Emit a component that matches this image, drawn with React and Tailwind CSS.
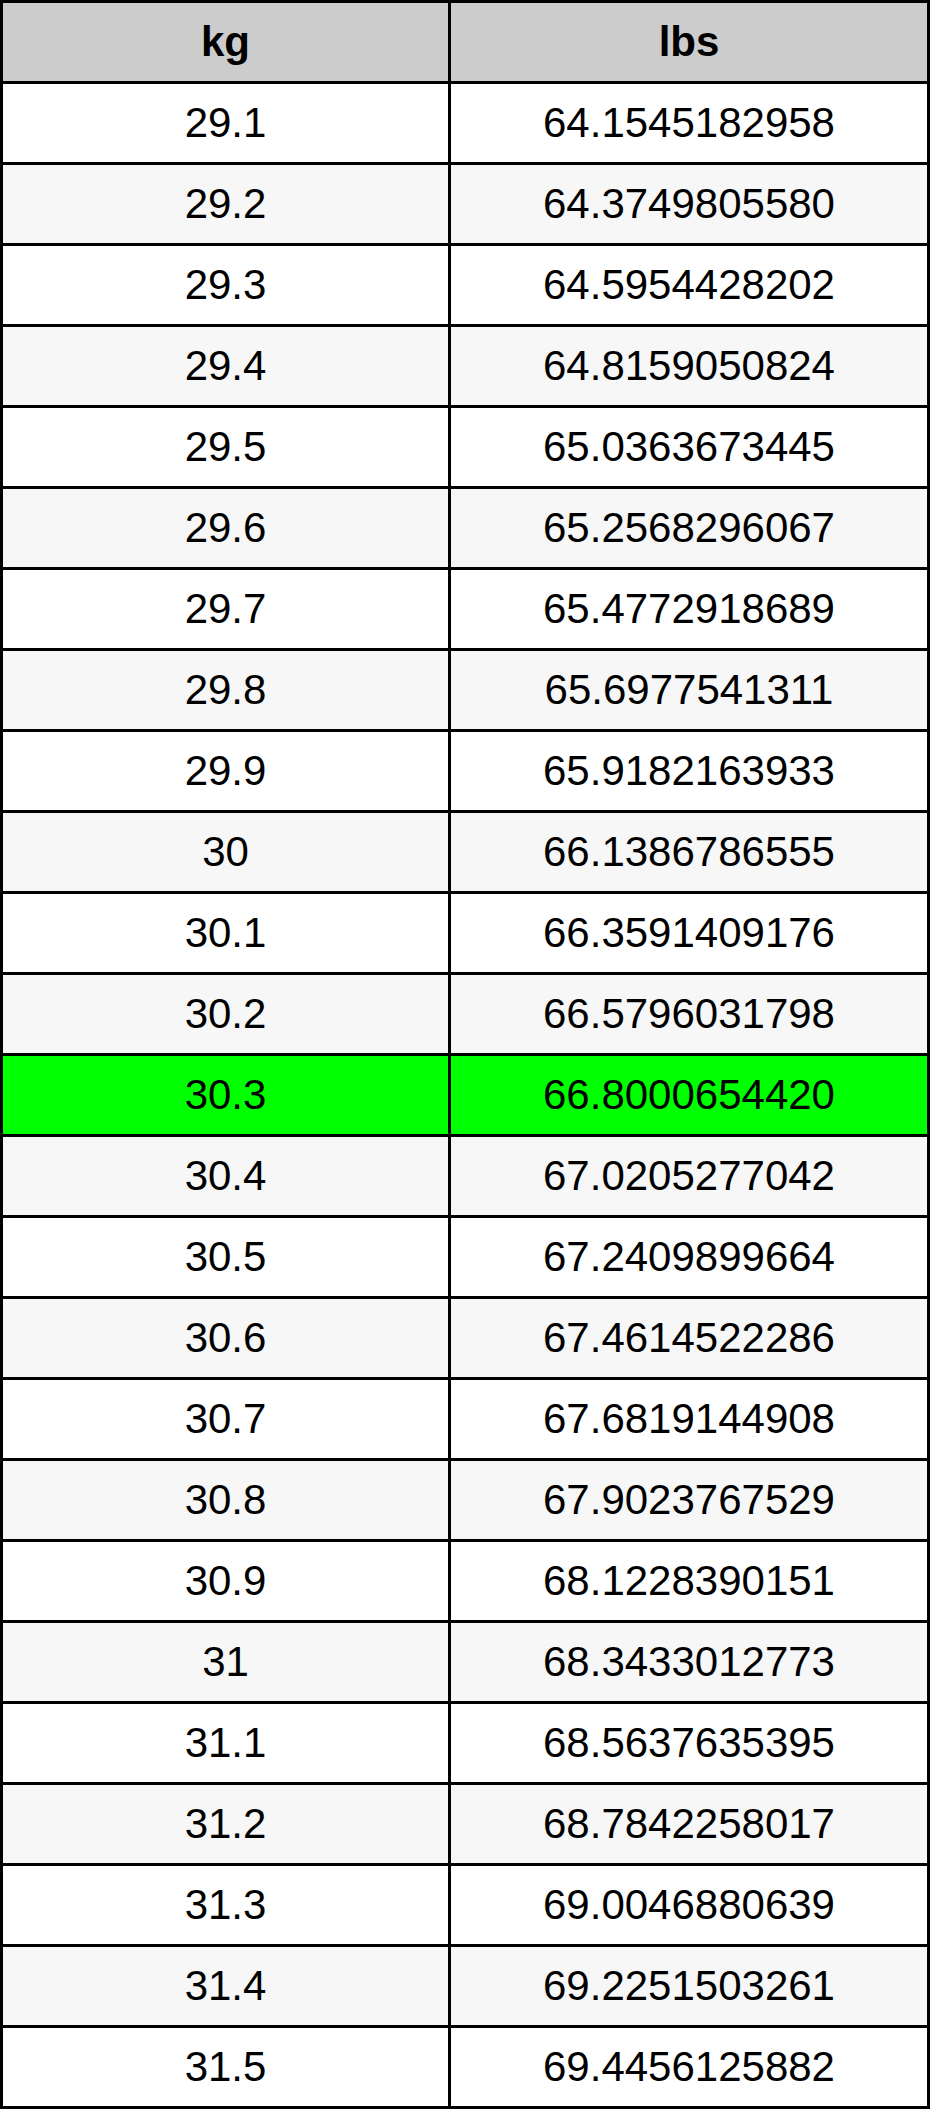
const rows = [
  ["29.1", "64.1545182958"],
  ["29.2", "64.3749805580"],
  ["29.3", "64.5954428202"],
  ["29.4", "64.8159050824"],
  ["29.5", "65.0363673445"],
  ["29.6", "65.2568296067"],
  ["29.7", "65.4772918689"],
  ["29.8", "65.6977541311"],
  ["29.9", "65.9182163933"],
  ["30", "66.1386786555"],
  ["30.1", "66.3591409176"],
  ["30.2", "66.5796031798"],
  ["30.3", "66.8000654420"],
  ["30.4", "67.0205277042"],
  ["30.5", "67.2409899664"],
  ["30.6", "67.4614522286"],
  ["30.7", "67.6819144908"],
  ["30.8", "67.9023767529"],
  ["30.9", "68.1228390151"],
  ["31", "68.3433012773"],
  ["31.1", "68.5637635395"],
  ["31.2", "68.7842258017"],
  ["31.3", "69.0046880639"],
  ["31.4", "69.2251503261"],
  ["31.5", "69.4456125882"],
];

function Row({ kg, lbs, bg, bold }) {
  return (
    <div className={`flex h-[81px] border-b-[3px] border-black ${bg}`}>
      <div
        className={`flex w-[448px] items-center justify-center border-r-[3px] border-black ${bold ? "font-bold" : ""}`}
      >
        {kg}
      </div>
      <div className={`flex flex-1 items-center justify-center ${bold ? "font-bold" : ""}`}>
        {lbs}
      </div>
    </div>
  );
}

export default function App() {
  return (
    <div className="min-h-[2115px] bg-white">
      <div className="w-[930px] border-x-[3px] border-t-[3px] border-black font-['Liberation_Sans',Arial,sans-serif] text-[42px] leading-none text-black">
        <Row kg="kg" lbs="lbs" bg="bg-[#cccccc]" bold />
        {rows.map(([kg, lbs], i) => {
          let bg = i % 2 === 0 ? "bg-white" : "bg-[#f7f7f7]";
          if (kg === "30.3") bg = "bg-[#00ff00]";
          return <Row key={kg} kg={kg} lbs={lbs} bg={bg} />;
        })}
      </div>
    </div>
  );
}
